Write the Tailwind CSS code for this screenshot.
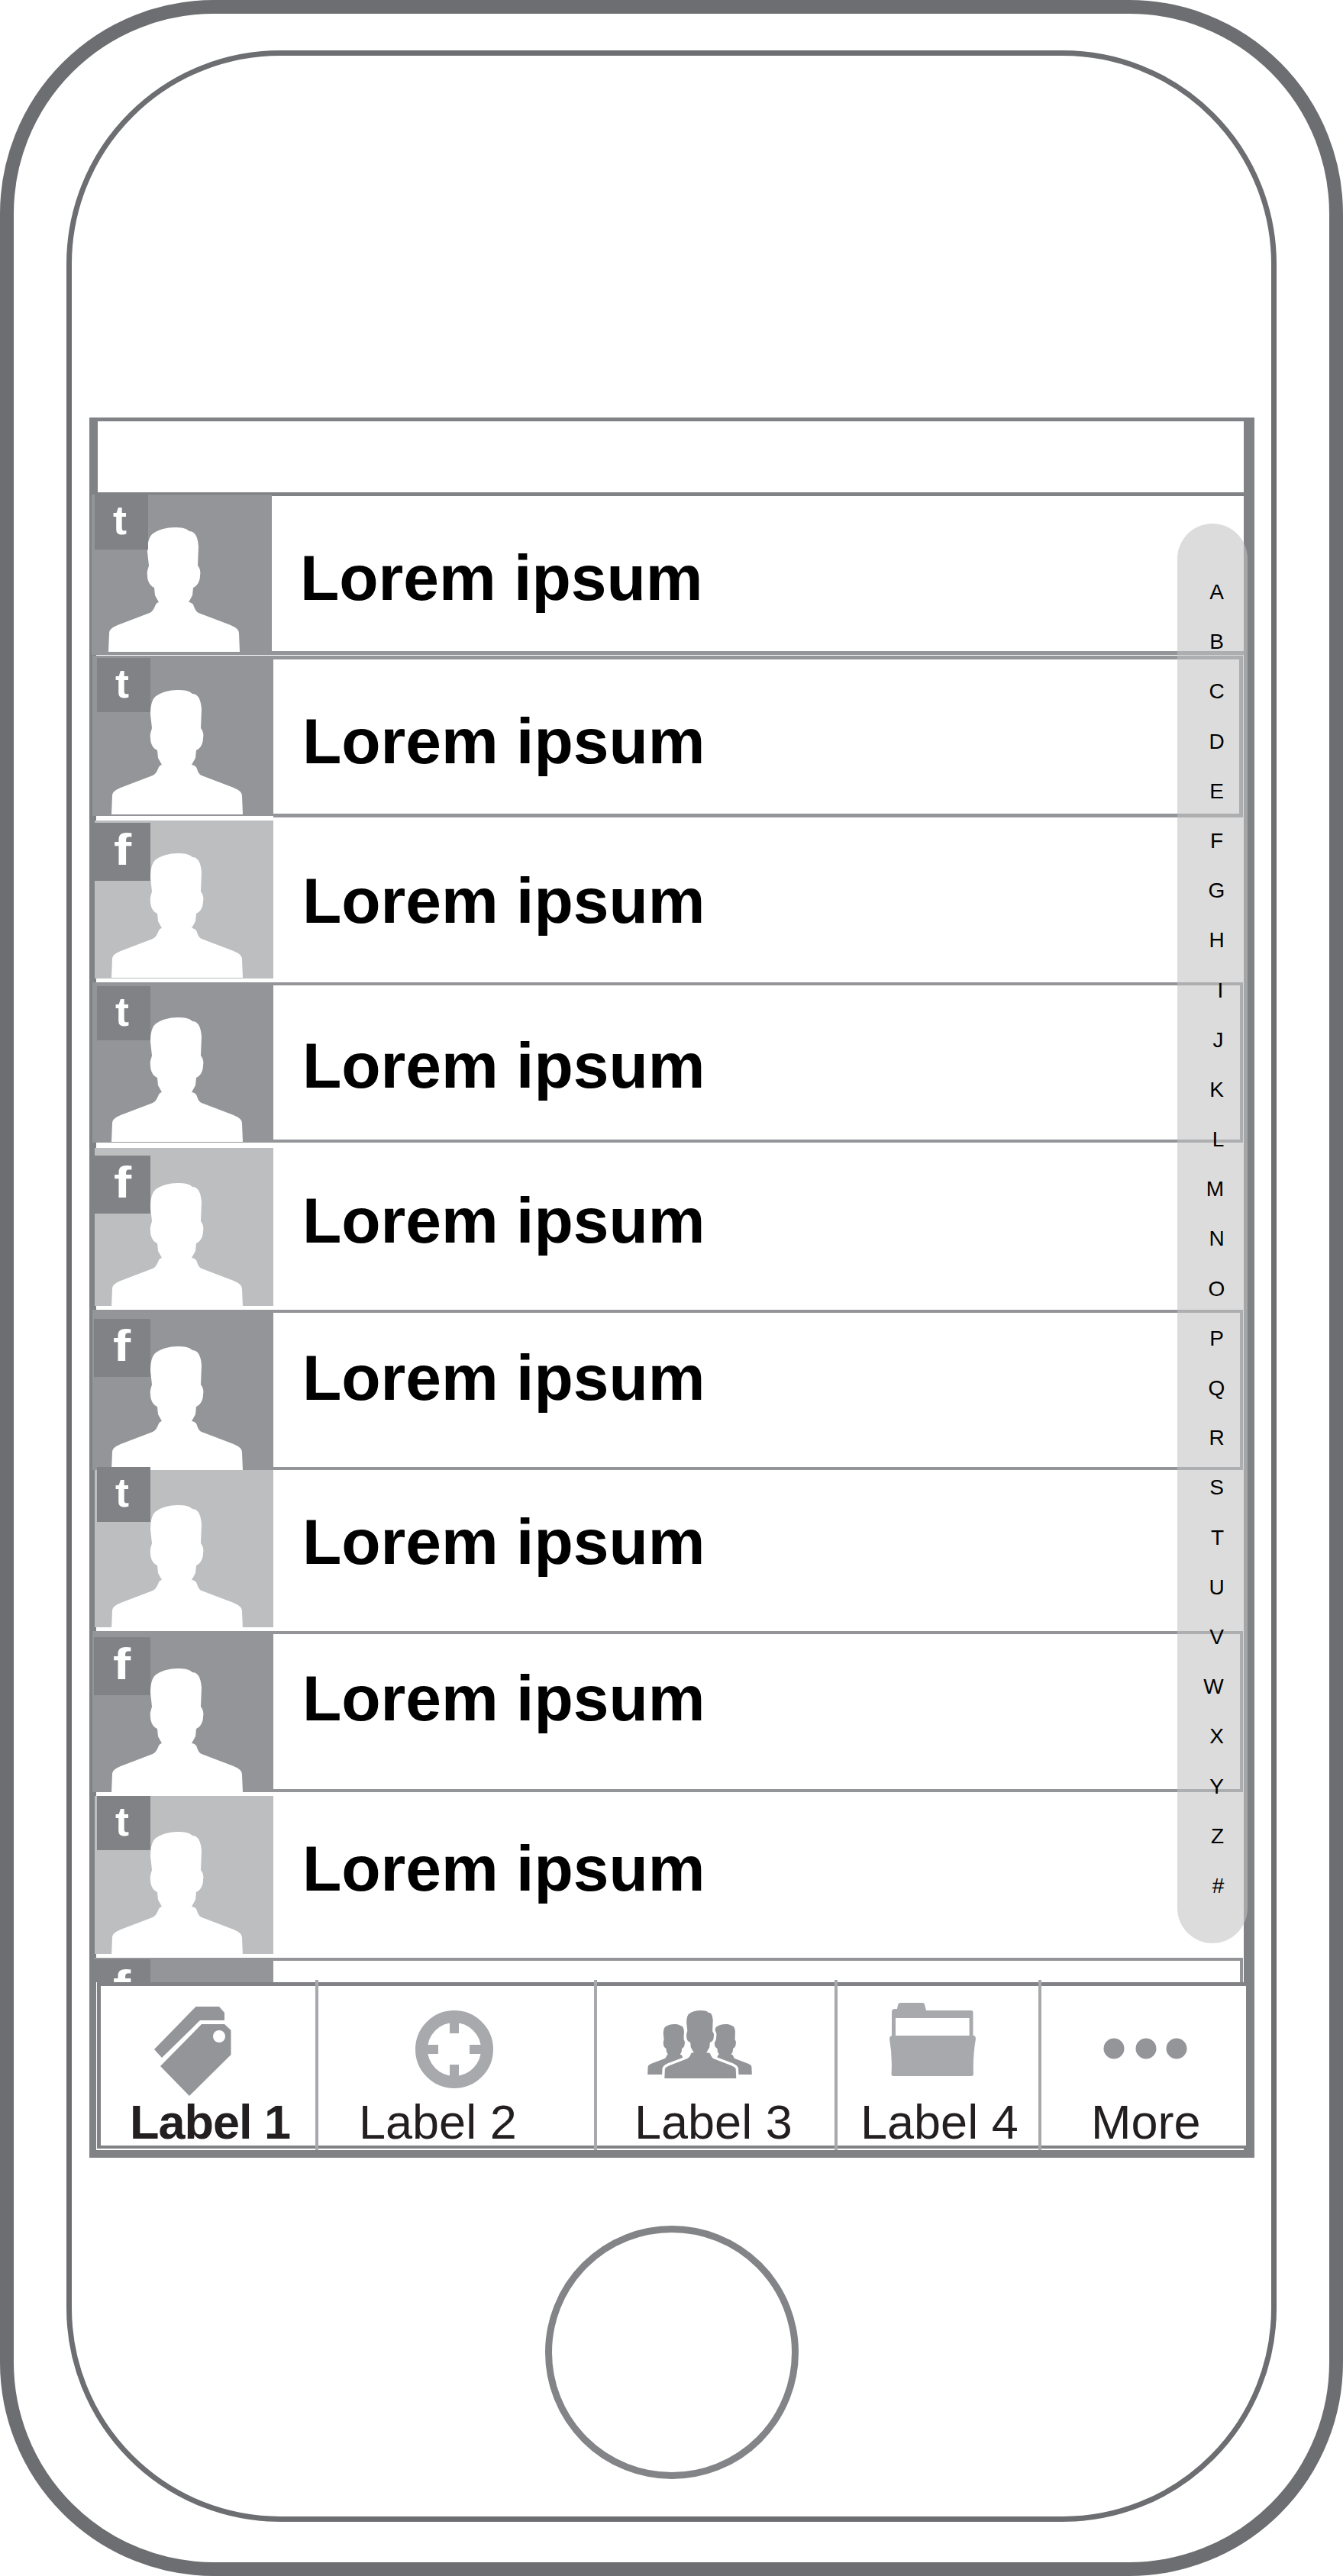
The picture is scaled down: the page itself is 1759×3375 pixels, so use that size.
<!doctype html>
<html>
<head>
<meta charset="utf-8">
<script src="https://cdn.jsdelivr.net/npm/@tailwindcss/browser@4"></script>
</head>
<body class="bg-white">
<svg width="0" height="0" class="absolute">
  <symbol id="p" viewBox="0 0 172 163" overflow="visible">
    <path d="M86 0C96 0 102 1 106 5C112 5 117 10 118 25L117 50C120 54 121 58 120 63C120 71 116 77 111 79L110 89L105 98C108 98 110 100 111 101C113 106 114 110 118 112L160 128C167 131 171 134 171 139L172 163L0 163L1 139C1 134 5 131 12 128L54 112C58 110 60 106 62 101C63 99 65 98 66 98L61 89L60 79C55 77 51 71 51 63C50 58 52 54 53 50L51 32C51 18 54 10 60 7C66 3 76 0 86 0Z"/>
  </symbol>
</svg>

<div class="w-[1759px] h-[3375px] border-[18px] border-[#6d6e71] rounded-[280px] font-['Liberation_Sans',Arial,sans-serif] text-black overflow-hidden">
  <div class="mt-[48px] ml-[69px] w-[1585px] h-[3238px] border-[7px] border-[#6d6e71] rounded-[280px]">
    <div class="relative mt-[474px] ml-[23px] w-[1526px] h-[2280px] border-t-[5px] border-l-[9px] border-r-[14px] border-b-[10px] border-[#808285] flex flex-col">

      <div class="h-[98px] shrink-0 border-b-[5px] border-l-[2px] border-[#808285] bg-white"></div>

      <!-- row 1 -->
      <div class="flex h-[209px] shrink-0">
        <div class="relative shrink-0 -ml-[6px] -mt-[2px] w-[236px] h-[210px] bg-[#939598]">
          <svg class="absolute left-[22px] top-[43px] w-[172px] h-[163px]" fill="#fff"><use href="#p"/></svg>
          <div class="absolute left-[4px] top-0 w-[70px] h-[72px] bg-[#808285] text-white font-bold text-[54px] leading-[56px] pt-[5px] pr-[4px] text-center">t</div>
        </div>
        <div class="flex-1 h-[208px] border-b-[5px] border-[#939598] pt-[65px] pl-[37px] font-bold text-[84px] leading-[84px] bg-white">Lorem ipsum</div>
      </div>

      <!-- row 2 -->
      <div class="flex h-[216px] shrink-0">
        <div class="relative shrink-0 -ml-[5px] w-[237px] h-[210px] bg-[#939598]">
          <svg class="absolute left-[25px] top-[45px] w-[172px] h-[163px]" fill="#fff"><use href="#p"/></svg>
          <div class="absolute left-[6px] top-[3px] w-[70px] h-[71px] bg-[#808285] text-white font-bold text-[54px] leading-[56px] pt-[5px] pr-[4px] text-center">t</div>
        </div>
        <div class="flex-1 mr-[1px] h-[212px] border-t-[5px] border-b-[5px] border-r-[5px] border-[#939598] pt-[65px] pl-[38px] font-bold text-[84px] leading-[84px] bg-white">Lorem ipsum</div>
      </div>

      <!-- row 3 -->
      <div class="flex h-[212px] shrink-0">
        <div class="relative shrink-0 -ml-[2px] w-[234px] h-[207px] bg-[#bcbec0]">
          <svg class="absolute left-[22px] top-[43px] w-[172px] h-[163px]" fill="#fff"><use href="#p"/></svg>
          <div class="absolute left-0 top-[3px] w-[73px] h-[76px] bg-[#808285] text-white font-bold text-[58px] leading-[58px] pt-[6px] text-center"><span class="inline-block scale-x-[1.2]">f</span></div>
        </div>
        <div class="flex-1 pt-[63px] pl-[38px] font-bold text-[84px] leading-[84px]">Lorem ipsum</div>
      </div>

      <!-- row 4 -->
      <div class="flex h-[217px] shrink-0">
        <div class="relative shrink-0 -ml-[5px] w-[237px] h-[210px] bg-[#939598]">
          <svg class="absolute left-[25px] top-[46px] w-[172px] h-[163px]" fill="#fff"><use href="#p"/></svg>
          <div class="absolute left-[6px] top-[5px] w-[70px] h-[71px] bg-[#808285] text-white font-bold text-[54px] leading-[56px] pt-[5px] pr-[4px] text-center">t</div>
        </div>
        <div class="flex-1 mr-[1px] h-[210px] border-t-[4px] border-b-[4px] border-r-[4px] border-[#939598] pt-[63px] pl-[38px] font-bold text-[84px] leading-[84px] bg-white">Lorem ipsum</div>
      </div>

      <!-- row 5 -->
      <div class="flex h-[212px] shrink-0">
        <div class="relative shrink-0 -ml-[2px] w-[234px] h-[207px] bg-[#bcbec0]">
          <svg class="absolute left-[22px] top-[46px] w-[172px] h-[163px]" fill="#fff"><use href="#p"/></svg>
          <div class="absolute left-0 top-[10px] w-[73px] h-[76px] bg-[#808285] text-white font-bold text-[58px] leading-[58px] pt-[6px] text-center"><span class="inline-block scale-x-[1.2]">f</span></div>
        </div>
        <div class="flex-1 pt-[53px] pl-[38px] font-bold text-[84px] leading-[84px]">Lorem ipsum</div>
      </div>

      <!-- row 6 -->
      <div class="flex h-[210px] shrink-0">
        <div class="relative shrink-0 -ml-[5px] w-[237px] h-[210px] bg-[#939598]">
          <svg class="absolute left-[25px] top-[48px] w-[172px] h-[163px]" fill="#fff"><use href="#p"/></svg>
          <div class="absolute left-[2px] top-[12px] w-[74px] h-[76px] bg-[#808285] text-white font-bold text-[58px] leading-[58px] pt-[6px] text-center"><span class="inline-block scale-x-[1.2]">f</span></div>
        </div>
        <div class="flex-1 mr-[1px] h-[210px] border-t-[4px] border-b-[4px] border-r-[4px] border-[#939598] pt-[43px] pl-[38px] font-bold text-[84px] leading-[84px] bg-white">Lorem ipsum</div>
      </div>

      <!-- row 7 -->
      <div class="flex h-[211px] shrink-0">
        <div class="relative shrink-0 -ml-[2px] w-[234px] h-[206px] bg-[#bcbec0]">
          <svg class="absolute left-[22px] top-[46px] w-[172px] h-[163px]" fill="#fff"><use href="#p"/></svg>
          <div class="absolute left-[3px] -top-[4px] w-[70px] h-[72px] bg-[#808285] text-white font-bold text-[54px] leading-[56px] pt-[5px] pr-[4px] text-center">t</div>
        </div>
        <div class="flex-1 pt-[52px] pl-[38px] font-bold text-[84px] leading-[84px]">Lorem ipsum</div>
      </div>

      <!-- row 8 -->
      <div class="flex h-[216px] shrink-0">
        <div class="relative shrink-0 -ml-[5px] w-[237px] h-[211px] bg-[#939598]">
          <svg class="absolute left-[25px] top-[49px] w-[172px] h-[163px]" fill="#fff"><use href="#p"/></svg>
          <div class="absolute left-[2px] top-[8px] w-[74px] h-[76px] bg-[#808285] text-white font-bold text-[58px] leading-[58px] pt-[6px] text-center"><span class="inline-block scale-x-[1.2]">f</span></div>
        </div>
        <div class="flex-1 mr-[1px] h-[211px] border-t-[4px] border-b-[4px] border-r-[4px] border-[#939598] pt-[42px] pl-[38px] font-bold text-[84px] leading-[84px] bg-white">Lorem ipsum</div>
      </div>

      <!-- row 9 -->
      <div class="flex h-[212px] shrink-0">
        <div class="relative shrink-0 -ml-[2px] w-[234px] h-[207px] bg-[#bcbec0]">
          <svg class="absolute left-[22px] top-[47px] w-[172px] h-[163px]" fill="#fff"><use href="#p"/></svg>
          <div class="absolute left-[3px] top-0 w-[70px] h-[71px] bg-[#808285] text-white font-bold text-[54px] leading-[56px] pt-[5px] pr-[4px] text-center">t</div>
        </div>
        <div class="flex-1 pt-[53px] pl-[38px] font-bold text-[84px] leading-[84px]">Lorem ipsum</div>
      </div>

      <!-- row 10, cut off by the tab bar -->
      <div class="flex h-[32px] shrink-0">
        <div class="relative shrink-0 -ml-[3px] w-[235px] h-[32px] bg-[#939598] overflow-hidden">
          <div class="absolute left-0 top-[2px] w-[74px] h-[76px] bg-[#808285] text-white font-bold text-[58px] leading-[58px] pt-[6px] text-center"><span class="inline-block scale-x-[1.2]">f</span></div>
        </div>
        <div class="flex-1 mr-[1px] h-[32px] border-t-[4px] border-r-[4px] border-[#939598] bg-white"></div>
      </div>

      <!-- tab bar -->
      <div class="relative z-[1] flex h-[218px] shrink-0 ml-[1px] -mr-[3px] border-t-[5px] border-b-[4px] border-l-[5px] border-[#808285] bg-white text-[63px] leading-[60px] text-[#231f20]">
        <div class="w-[281px] shrink-0">
          <div class="h-[148px] pt-[27px] pl-[70px]">
            <svg class="block w-[101px] h-[117px]" viewBox="202 2629 101 117">
              <path fill="#939598" d="M256.6 2629H287L294 2637V2647H262L212 2696L202 2685Z"/>
              <path fill="#939598" fill-rule="evenodd" d="M264 2652H294L302.5 2660V2692L248 2746L210 2707ZM287 2660a8 8 0 1 0 .01 0Z"/>
            </svg>
          </div>
          <div class="pl-[38px] font-bold tracking-[-1px]">Label 1</div>
        </div>
        <div class="w-[4px] shrink-0 -mt-[8px] -mb-[6px] bg-[#a7a9ac]"></div>
        <div class="w-[361px] shrink-0">
          <div class="h-[148px] pt-[32px] pl-[127px]">
            <svg class="block w-[102px] h-[102px]" viewBox="544 2634 102 102">
              <circle cx="595" cy="2685" r="43" fill="none" stroke="#a7a9ac" stroke-width="16"/>
              <path fill="#a7a9ac" d="M589 2642H601V2664H589ZM589 2705H601V2728H589ZM552 2679H574V2691H552ZM615 2679H638V2691H615Z"/>
            </svg>
          </div>
          <div class="pl-[53px]">Label 2</div>
        </div>
        <div class="w-[4px] shrink-0 -mt-[8px] -mb-[6px] bg-[#a7a9ac]"></div>
        <div class="w-[311px] shrink-0">
          <div class="h-[148px] pt-[30px] pl-[66px]">
            <svg class="block w-[137px] h-[93px]" viewBox="848 2632 137 93" overflow="visible">
              <use href="#p" x="848" y="2652" width="70" height="66" fill="#939598"/>
              <use href="#p" x="915" y="2652" width="70" height="66" fill="#939598"/>
              <use href="#p" x="868.6" y="2632" width="97.4" height="93" fill="#939598" stroke="#fff" stroke-width="6"/>
            </svg>
          </div>
          <div class="pl-[49px]">Label 3</div>
        </div>
        <div class="w-[4px] shrink-0 -mt-[8px] -mb-[6px] bg-[#a7a9ac]"></div>
        <div class="w-[263px] shrink-0">
          <div class="h-[148px] pt-[22px] pl-[68px]">
            <svg class="block w-[113px] h-[96px]" viewBox="1165 2624 113 96">
              <path fill="#a7a9ac" d="M1168 2636Q1168 2632 1172 2632L1175 2632L1176 2627Q1176.5 2624 1180 2624L1208 2624Q1211 2624 1211.5 2628L1213 2634L1272 2634Q1274.5 2634 1274.5 2637L1274.5 2667L1276 2667Q1278 2668 1278 2671Q1274 2695 1275 2717Q1275 2720 1272 2720L1170 2720Q1167.5 2720 1167.5 2717Q1169 2695 1165 2671Q1165 2668 1168 2667Z"/>
              <rect x="1173" y="2644" width="96.6" height="23" fill="#fff"/>
            </svg>
          </div>
          <div class="pl-[30px]">Label 4</div>
        </div>
        <div class="w-[4px] shrink-0 -mt-[8px] -mb-[6px] bg-[#a7a9ac]"></div>
        <div class="w-[268px] shrink-0">
          <div class="h-[148px] pt-[68px] pl-[81px]">
            <svg class="block w-[110px] h-[28px]" viewBox="1445 2670 110 28">
              <circle cx="1459" cy="2684" r="13.5" fill="#939598"/>
              <circle cx="1501" cy="2684" r="13.5" fill="#939598"/>
              <circle cx="1541" cy="2684" r="13.5" fill="#939598"/>
            </svg>
          </div>
          <div class="pl-[65px]">More</div>
        </div>
      </div>

      <!-- alphabet index -->
      <div class="absolute z-[2] left-[1416px] top-[134px] w-[92px] h-[1860px] rounded-[46px] bg-[#c1c1c1]/57 pt-[57px] pl-[11px] flex flex-col items-center text-[28px] leading-[65.2px]">
        <div class="h-[65.2px]">A</div><div class="h-[65.2px]">B</div><div class="h-[65.2px]">C</div><div class="h-[65.2px]">D</div><div class="h-[65.2px]">E</div><div class="h-[65.2px]">F</div><div class="h-[65.2px]">G</div><div class="h-[65.2px]">H</div>
        <div class="h-[65.2px] translate-x-[5px]">I</div><div class="h-[65.2px] translate-x-[2px]">J</div><div class="h-[65.2px]">K</div><div class="h-[65.2px] translate-x-[2px]">L</div><div class="h-[65.2px] -translate-x-[2px]">M</div><div class="h-[65.2px]">N</div><div class="h-[65.2px]">O</div><div class="h-[65.2px]">P</div>
        <div class="h-[65.2px]">Q</div><div class="h-[65.2px]">R</div><div class="h-[65.2px]">S</div><div class="h-[65.2px] translate-x-[1px]">T</div><div class="h-[65.2px]">U</div><div class="h-[65.2px]">V</div><div class="h-[65.2px] -translate-x-[4px]">W</div><div class="h-[65.2px]">X</div><div class="h-[65.2px]">Y</div><div class="h-[65.2px] translate-x-[1px]">Z</div><div class="h-[65.2px] translate-x-[2px]">#</div>
      </div>
    </div>

    <div class="mt-[89px] mx-auto w-[332px] h-[332px] rounded-full border-[9px] border-[#838487]"></div>
  </div>
</div>
</body>
</html>
